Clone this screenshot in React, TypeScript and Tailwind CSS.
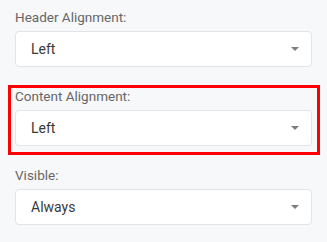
import React from "react";

function Arrow() {
  return (
    <svg width="8" height="4" viewBox="0 0 8 4" className="shrink-0">
      <polygon points="0,0 8,0 4,4" fill="#7d7d7d" />
    </svg>
  );
}

function Field({ label, value, highlight }: { label: string; value: string; highlight?: boolean }) {
  return (
    <div className="relative flex flex-col gap-[4px]">
      <div className="h-[20px] text-[13.5px] leading-[20px] text-[#666666]">{label}</div>
      <div className="flex h-[36px] items-center justify-between rounded-[4px] border border-[#e2e4e8] bg-white pl-[15px] pr-[12px]">
        <span className="text-[14px] text-[#3a3a3a]">{value}</span>
        <Arrow />
      </div>
      {highlight && (
        <span className="pointer-events-none absolute left-[-7px] right-[-8px] top-[-1px] bottom-[-9px] border-[3px] border-[#ff0000]" />
      )}
    </div>
  );
}

export default function App() {
  return (
    <div
      className="flex h-[242px] w-[327px] flex-col gap-[19px] bg-[#f7f8fa] pl-[15px] pr-[15px] pt-[7px]"
      style={{ fontFamily: "Roboto, 'Noto Sans', sans-serif" }}
    >
      <Field label="Header Alignment:" value="Left" />
      <Field label="Content Alignment:" value="Left" highlight />
      <Field label="Visible:" value="Always" />
    </div>
  );
}
